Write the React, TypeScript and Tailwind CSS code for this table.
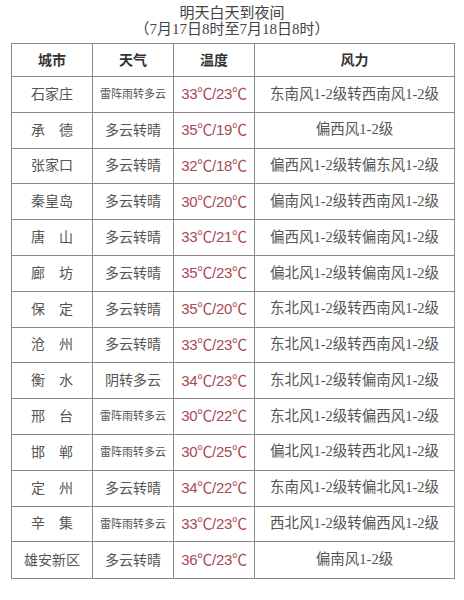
import React from "react";

const rows: [string, string, string, string][] = [
  ["石家庄", "雷阵雨转多云", "33℃/23℃", "东南风1-2级转西南风1-2级"],
  ["承　德", "多云转晴", "35℃/19℃", "偏西风1-2级"],
  ["张家口", "多云转晴", "32℃/18℃", "偏西风1-2级转偏东风1-2级"],
  ["秦皇岛", "多云转晴", "30℃/20℃", "偏南风1-2级转西南风1-2级"],
  ["唐　山", "多云转晴", "33℃/21℃", "偏西风1-2级转偏南风1-2级"],
  ["廊　坊", "多云转晴", "35℃/23℃", "偏北风1-2级转偏南风1-2级"],
  ["保　定", "多云转晴", "35℃/20℃", "东北风1-2级转西南风1-2级"],
  ["沧　州", "多云转晴", "33℃/23℃", "东北风1-2级转西南风1-2级"],
  ["衡　水", "阴转多云", "34℃/23℃", "东北风1-2级转偏南风1-2级"],
  ["邢　台", "雷阵雨转多云", "30℃/22℃", "东北风1-2级转偏西风1-2级"],
  ["邯　郸", "雷阵雨转多云", "30℃/25℃", "偏北风1-2级转西北风1-2级"],
  ["定　州", "多云转晴", "34℃/22℃", "东南风1-2级转偏北风1-2级"],
  ["辛　集", "雷阵雨转多云", "33℃/23℃", "西北风1-2级转偏西风1-2级"],
  ["雄安新区", "多云转晴", "36℃/23℃", "偏南风1-2级"],
];

const serif = "font-['Liberation_Serif','Noto_Sans_CJK_SC',serif]";

export default function App() {
  return (
    <div className={`w-[464px] h-[600px] bg-white ${serif} text-[#555]`}>
      <div className="pt-[5px] flex flex-col items-center text-[15px] leading-[16px] text-[#444]">
        <div>明天白天到夜间</div>
        <div>（7月17日8时至7月18日8时）</div>
      </div>
      <div className="ml-[11px] mt-[6px] w-[444px] border-[1.5px] border-[#8a8a8a]">
        <div className="grid grid-cols-[81px_81px_81px_1fr] h-[33px] border-b-[1.5px] border-[#8a8a8a] text-[14px] font-bold text-[#333]">
          <div className="flex items-center justify-center border-r-[1.5px] border-[#8a8a8a]">城市</div>
          <div className="flex items-center justify-center border-r-[1.5px] border-[#8a8a8a]">天气</div>
          <div className="flex items-center justify-center border-r-[1.5px] border-[#8a8a8a]">温度</div>
          <div className="flex items-center justify-center">风力</div>
        </div>
        {rows.map((r, i) => (
          <div
            key={i}
            className={`grid grid-cols-[81px_81px_81px_1fr] h-[35.8px] ${i < rows.length - 1 ? "border-b-[1.5px] border-[#8a8a8a]" : ""}`}
          >
            <div className="flex items-center justify-center border-r-[1.5px] border-[#8a8a8a] text-[14px]">{r[0]}</div>
            <div className={`flex items-center justify-center border-r-[1.5px] border-[#8a8a8a] ${r[1].length > 4 ? "text-[11px]" : "text-[14px]"}`}>{r[1]}</div>
            <div className="flex items-center justify-center border-r-[1.5px] border-[#8a8a8a] text-[15px] text-[#a84a55] font-['Liberation_Sans','Noto_Sans_CJK_SC',sans-serif] tracking-[-0.3px]">{r[2]}</div>
            <div className="flex items-center justify-center text-[14.5px] whitespace-nowrap">{r[3]}</div>
          </div>
        ))}
      </div>
    </div>
  );
}
